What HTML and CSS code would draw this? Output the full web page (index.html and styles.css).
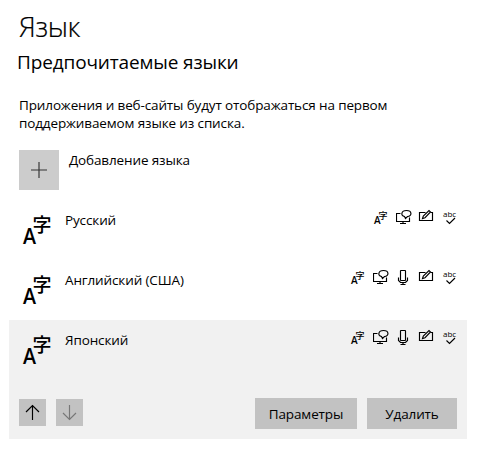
FILE: index.html
```html
<!DOCTYPE html>
<html lang="ru">
<head>
    <meta charset="UTF-8">
    <meta name="viewport" content="width=device-width, initial-scale=1.0">
    <title>Язык</title>
    <link rel="stylesheet" href="styles.css">
</head>
<body>
    <svg class="sprite" width="0" height="0">
        <symbol id="display" viewBox="0 0 16 16">
            <path d="M4.500 4.500h-4v8h13v-4M4 14.500h6M7 12.500v2"/>
            <path d="M8.500 7.500C4.500 6.500 5 1.500 10.500 1.500s6 5.500 1 6l-2 2z"/>
        </symbol>
        <symbol id="mic" viewBox="0 0 16 16">
            <rect x="4.500" y="1.500" width="5" height="10" rx=".5"/>
            <path d="M2.500 8.500v3l2 2h5l2-2v-3M7 13.500v2M4.500 15.500h5"/>
        </symbol>
        <symbol id="pen" viewBox="0 0 16 16">
            <path d="M7.500 3.500h-6v8h13v-8h-2"/>
            <path d="M4.500 9.500l.8-2.500 5.700-5.500 1.500 1.500-5.500 5.700z"/>
        </symbol>
    </svg>

    <div class="page">
        <h1>Язык</h1>
        <h2>Предпочитаемые языки</h2>
        <p class="description">Приложения и веб-сайты будут отображаться на первом<br>поддерживаемом языке из списка.</p>

        <div class="add">
            <button class="add-button" aria-label="Добавление языка">
                <svg width="16" height="16"><path d="M8 0v16M0 8h16"/></svg>
            </button>
            <span class="add-label">Добавление языка</span>
        </div>

        <div class="language">
            <svg class="language-icon" viewBox="0 0 28 28"><text class="latin" x="0" y="28" font-size="22" textLength="13" lengthAdjust="spacingAndGlyphs">A</text><text class="kanji" x="9.500" y="16" font-size="19">字</text></svg>
            <span class="name">Русский</span>
            <div class="features">
                <svg viewBox="0 0 16 16"><text class="latin" x="1" y="15" font-size="10">A</text><text class="kanji" x="5.500" y="9.500" font-size="9">字</text></svg>
                <svg><use href="#display"/></svg>
                <svg class="pen"><use href="#pen"/></svg>
                <svg viewBox="0 0 16 16"><text class="abc" x="1" y="8" font-size="8">abc</text><path d="M4.500 11.500l3 3 5.500-5.500"/></svg>
            </div>
        </div>

        <div class="language">
            <svg class="language-icon" viewBox="0 0 28 28"><text class="latin" x="0" y="28" font-size="22" textLength="13" lengthAdjust="spacingAndGlyphs">A</text><text class="kanji" x="9.500" y="16" font-size="19">字</text></svg>
            <span class="name">Английский (США)</span>
            <div class="features">
                <svg viewBox="0 0 16 16"><text class="latin" x="1" y="15" font-size="10">A</text><text class="kanji" x="5.500" y="9.500" font-size="9">字</text></svg>
                <svg><use href="#display"/></svg>
                <svg><use href="#mic"/></svg>
                <svg class="pen"><use href="#pen"/></svg>
                <svg viewBox="0 0 16 16"><text class="abc" x="1" y="8" font-size="8">abc</text><path d="M4.500 11.500l3 3 5.500-5.500"/></svg>
            </div>
        </div>

        <div class="selected">
            <div class="language">
                <svg class="language-icon" viewBox="0 0 28 28"><text class="latin" x="0" y="28" font-size="22" textLength="13" lengthAdjust="spacingAndGlyphs">A</text><text class="kanji" x="9.500" y="16" font-size="19">字</text></svg>
                <span class="name">Японский</span>
                <div class="features">
                    <svg viewBox="0 0 16 16"><text class="latin" x="1" y="15" font-size="10">A</text><text class="kanji" x="5.500" y="9.500" font-size="9">字</text></svg>
                    <svg><use href="#display"/></svg>
                    <svg><use href="#mic"/></svg>
                    <svg class="pen"><use href="#pen"/></svg>
                    <svg viewBox="0 0 16 16"><text class="abc" x="1" y="8" font-size="8">abc</text><path d="M4.500 11.500l3 3 5.500-5.500"/></svg>
                </div>
            </div>
            <div class="actions">
                <button class="move" aria-label="Вверх">
                    <svg width="27" height="27"><path d="M13.500 6v15M7 13l6.500-6.500 6.500 6.500"/></svg>
                </button>
                <button class="move" aria-label="Вниз" disabled>
                    <svg width="27" height="27"><path d="M13.500 6v15M7 14l6.500 6.500 6.500-6.500"/></svg>
                </button>
                <button class="options">Параметры</button>
                <button class="remove">Удалить</button>
            </div>
        </div>
    </div>
</body>
</html>
```
FILE: styles.css
```css
body {
    margin: 0;
    background: #fff;
    color: #000;
    font-family: "Open Sans", "Noto Sans", sans-serif;
    font-size: 13.5px;
    line-height: 18px;
    letter-spacing: -0.13px;
}
.sprite {
    display: block;
}
svg {
    fill: none;
    stroke: #000;
    stroke-width: 1.15;
    flex: none;
    letter-spacing: 0;
}
svg text {
    fill: #000;
    stroke: none;
}
.latin {
    font-family: "Open Sans", sans-serif;
    font-weight: 600;
}
.kanji {
    font-family: "Noto Sans CJK JP", sans-serif;
    font-weight: 500;
}
.abc {
    font-family: "Open Sans", sans-serif;
}
.page {
    width: 458px;
    padding: 8px 0 0 9px;
}
h1, h2 {
    margin: 0;
    white-space: nowrap;
}
h1 {
    padding-left: 10px;
    font-size: 28px;
    font-weight: 300;
    line-height: 36px;
    letter-spacing: -0.4px;
    -webkit-text-stroke: 0.2px #000;
}
h2 {
    padding: 2px 0 0 8px;
    font-size: 19px;
    font-weight: 400;
    line-height: 32px;
    letter-spacing: -0.14px;
}
.description {
    margin: 18px 0 0 10px;
    white-space: nowrap;
}
.add {
    display: flex;
    margin-top: 18px;
    padding-left: 10px;
    height: 50px;
}
button {
    border: 0;
    padding: 0;
    background: #c2c2c2;
    color: #000;
    font: inherit;
    letter-spacing: inherit;
}
.add-button {
    display: flex;
    align-items: center;
    justify-content: center;
    width: 40px;
    height: 40px;
    background: #ccc;
}
.add-button svg {
    stroke: #333;
}
.add-label {
    margin: 1px 0 0 10px;
}
.language {
    display: flex;
    height: 60px;
    padding: 0 9px 0 14px;
}
.language-icon {
    width: 28px;
    height: 28px;
    margin-top: 16px;
    overflow: visible;
}
.name {
    margin: 11px 0 0 14px;
}
.features {
    display: flex;
    gap: 7px;
    margin: 9px 0 0 auto;
}
.features svg {
    width: 16px;
    height: 16px;
    overflow: visible;
}
.features .pen {
    margin: 0 1px 0 -1px;
}
.selected {
    height: 119px;
    background: #f1f1f1;
}
.actions {
    display: flex;
    align-items: center;
    padding: 18px 10px 0;
}
.move {
    width: 27px;
    height: 27px;
    margin: 0 10px 2px 0;
}
.move svg {
    display: block;
}
.move:disabled svg {
    stroke: #777;
}
.options, .remove {
    height: 31px;
}
.options {
    width: 102px;
    margin-left: auto;
}
.remove {
    width: 90px;
    margin-left: 10px;
}
```
